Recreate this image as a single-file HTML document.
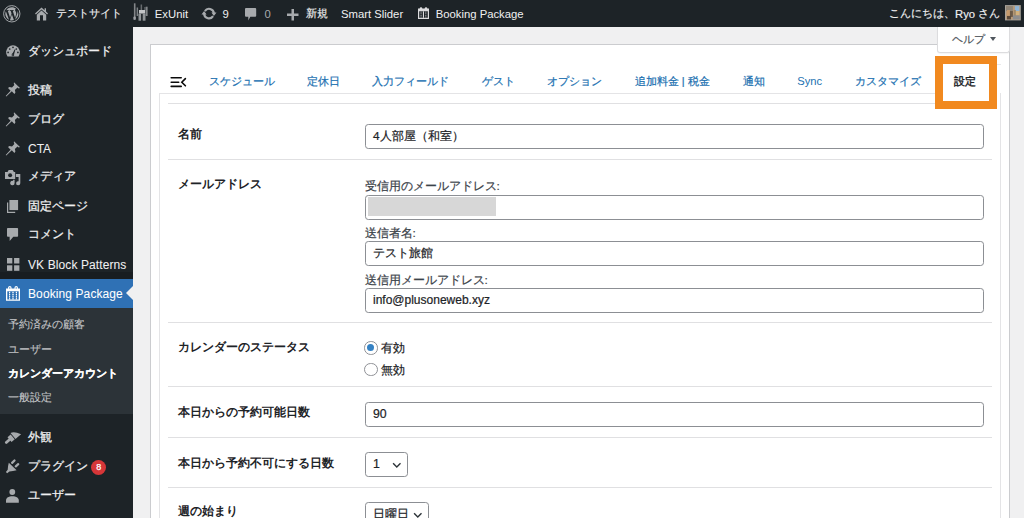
<!DOCTYPE html>
<html lang="ja"><head><meta charset="utf-8">
<style>
*{margin:0;padding:0;box-sizing:border-box}
html,body{width:1024px;height:518px;overflow:hidden;background:#f0f0f1;font-family:"Liberation Sans",sans-serif;color:#1d2327}
.a{position:absolute;white-space:nowrap}
svg.a{overflow:visible}
#bar{position:absolute;left:0;top:0;width:1024px;height:27px;background:#1d2327;color:#f0f0f1;font-size:11px}
#bar .t{position:absolute;top:0;line-height:27px;white-space:nowrap;-webkit-text-stroke:.15px currentColor}
#bar .L{top:1px;font-size:11.3px;-webkit-text-stroke:0}
#side{position:absolute;left:0;top:27px;width:133px;height:491px;background:#1d2327;color:#f0f0f1;font-size:12px;-webkit-text-stroke:.25px currentColor}
.m{position:absolute;left:28px;line-height:16px;white-space:nowrap}
.sm{position:absolute;left:8px;font-size:11.2px;color:#c3c4c7;line-height:16px;white-space:nowrap;-webkit-text-stroke:.12px currentColor}
#panel{position:absolute;left:150px;top:44px;width:860px;height:500px;background:#fff;border:1px solid #cbcccf}
#help{position:absolute;left:937px;top:27px;width:72.5px;height:25.5px;background:#fff;border:1px solid #dcdcde;border-top:none;border-radius:0 0 3px 3px;box-shadow:0 1px 1px rgba(0,0,0,.04)}
.tab{position:absolute;top:72.5px;line-height:17px;font-size:10.9px;color:#2271b1;white-space:nowrap}
#box{position:absolute;left:159px;top:93px;width:842px;height:450px;border:1px solid #e4e4e6;border-top:none;background:#fff}
.sep{position:absolute;left:168px;width:824px;height:1px;background:#e0e0e2}
.lbl{position:absolute;left:178px;font-size:11.8px;font-weight:bold;line-height:16px;color:#1d2327;white-space:nowrap}
.inp{position:absolute;left:365px;width:619px;height:24.6px;border:1px solid #8c8f94;border-radius:3.3px;background:#fff;font-size:11.8px;line-height:22.6px;padding-left:7px;color:#1d2327;white-space:nowrap}
.cap{position:absolute;left:364.5px;font-size:11.8px;line-height:16px;color:#3c434a;white-space:nowrap}
.inp,.cap,.tab{-webkit-text-stroke:.22px currentColor}
</style></head><body>
<div id="bar">
  <svg class="a" style="left:3px;top:4.8px" width="17.6" height="17.6" viewBox="0 0 20 20">
    <circle cx="10" cy="10" r="9.3" fill="none" stroke="#a7aaad" stroke-width="1.1"/>
    <path fill="#a7aaad" d="M2.6 10c0 2.9 1.700 5.500 4.200 6.700L3.300 7C2.900 7.900 2.600 8.900 2.600 10zM15 9.600c0-.9-.3-1.600-.6-2.100-.4-.6-.7-1.100-.7-1.700 0-.7.5-1.300 1.200-1.300h.1C13.700 3.300 11.900 2.600 10 2.600c-2.600 0-4.900 1.300-6.200 3.300h.5c.8 0 2-.1 2-.1.4 0 .5.600 0 .6 0 0-.4 0-.9.100l2.700 8.100 1.600-4.900L8.700 6.500c-.4 0-.8-.1-.8-.1-.4 0-.4-.6 0-.6 0 0 1.200.1 2 .1.800 0 2-.1 2-.1.400 0 .5.600 0 .6 0 0-.4 0-.9.100l2.700 8 .7-2.400c.3-1 .6-1.700.6-2.500zM10.100 10.700l-2.200 6.500c.7.2 1.400.3 2.100.3.900 0 1.700-.1 2.500-.4l-.1-.1-2.300-6.300zm6.400-4.200c0 .2.1.5.1.8 0 .8-.2 1.700-.6 2.800l-2.300 6.600c2.200-1.300 3.700-3.700 3.700-6.400 0-1.400-.3-2.600-.9-3.800z"/>
  </svg>
  <svg class="a" style="left:35px;top:7.3px" width="13" height="13.5" viewBox="0 0 13 13.5">
    <path fill="#a7aaad" d="M6.5 0.6L0 6.4l0.9 1L6.5 2.5l5.6 4.900.9-1L11 4.500V1.300H9.600v1.900z"/>
    <path fill="#a7aaad" d="M6.5 3.600L1.800 7.700v5.800h9.400V7.700zM5 8.200h3v5.300H5z" fill-rule="evenodd"/>
  </svg>
  <div class="t" style="left:55.5px">テストサイト</div>
  <svg class="a" style="left:130px;top:2px" width="22" height="22" viewBox="0 0 22 22">
    <g fill="#a5a8ab">
      <rect x="3.900" y="1.300" width="1.600" height="16" opacity=".75"/>
      <rect x="3.300" y="14.500" width="2.600" height="3.500" rx="1" opacity=".8"/>
      <rect x="6.600" y="5.500" width="1.500" height="8.500" opacity=".7"/>
      <rect x="15.700" y="4.700" width="1.900" height="9.300" opacity=".75"/>
      <rect x="10.600" y="2.500" width="1.500" height="6" opacity=".55"/>
      <rect x="14.300" y="5" width="1.200" height="3" opacity=".5"/>
      <rect x="9" y="8" width="6.200" height="3.600" fill="#c3c5c7"/>
      <rect x="8.500" y="11.700" width="2.600" height="7" opacity=".85"/>
      <rect x="12.700" y="11.700" width="2.800" height="7" opacity=".85"/>
    </g>
  </svg>
  <div class="t L" style="left:154.8px">ExUnit</div>
  <svg class="a" style="left:201px;top:7px" width="16" height="13" viewBox="0 0 16 13">
    <path fill="none" stroke="#a7aaad" stroke-width="2.100" d="M3.900 4.100A4.900 4.900 0 0 1 12.900 6.300M12.100 9.100A4.900 4.900 0 0 1 3.100 6.900"/>
    <path fill="#a7aaad" d="M10.400 5.600h5.100L12.900 9zM.5 7.400h5.100L3.100 4z"/>
  </svg>
  <div class="t L" style="left:222.5px">9</div>
  <svg class="a" style="left:244.8px;top:8px" width="11.2" height="12.5" viewBox="0 0 11.2 12.5">
    <path fill="#a7aaad" d="M1 0h9.200a1 1 0 0 1 1 1v6.800a1 1 0 0 1-1 1H5.300L3.300 12.400V8.800H1a1 1 0 0 1-1-1V1a1 1 0 0 1 1-1z"/>
  </svg>
  <div class="t L" style="left:264.5px;color:#a7aaad">0</div>
  <svg class="a" style="left:287px;top:8.6px" width="11.5" height="11.4" viewBox="0 0 11.5 11.4">
    <path fill="#a7aaad" d="M4.500 0h2.500v4.500h4.500v2.500H7v4.400H4.500V7H0V4.500h4.500z"/>
  </svg>
  <div class="t" style="left:305.5px">新規</div>
  <div class="t L" style="left:341px">Smart Slider</div>
  <svg class="a" style="left:418px;top:6.9px" width="11" height="12" viewBox="0 0 11 12">
    <path fill="#dcdcde" fill-rule="evenodd" d="M0 1.600h11V12H0zM1.200 4.300v6.500h8.600V4.300z"/>
    <circle cx="3" cy="1.500" r="1.300" fill="#dcdcde"/><circle cx="8" cy="1.500" r="1.300" fill="#dcdcde"/>
    <g fill="#dcdcde"><rect x="4.900" y="4.300" width="1.100" height="6.500"/>
    <rect x="2.600" y="4.700" width=".9" height=".9"/><rect x="2.600" y="6.300" width=".9" height=".9"/><rect x="2.600" y="7.900" width=".9" height=".9"/><rect x="2.600" y="9.500" width=".9" height=".9"/>
    <rect x="7.400" y="4.700" width=".9" height=".9"/><rect x="7.400" y="6.300" width=".9" height=".9"/><rect x="7.400" y="7.900" width=".9" height=".9"/><rect x="7.400" y="9.500" width=".9" height=".9"/></g>
  </svg>
  <div class="t L" style="left:435.7px">Booking Package</div>
  <div class="t" style="left:889px">こんにちは、<span style="font-size:11.3px;position:relative;top:1px">Ryo</span> さん</div>
  <svg class="a" style="left:1005px;top:5.2px" width="15.8" height="15.5" viewBox="0 0 16 15.5">
    <rect width="16" height="15.5" fill="#a9a49c"/>
    <rect x="1" y="1" width="14" height="13.5" fill="#b89a78"/>
    <rect x="1" y="1" width="7" height="5" fill="#8f8476"/>
    <rect x="10" y="1" width="4.500" height="5" fill="#8fb4d6"/>
    <rect x="2" y="5" width="3" height="6" fill="#c49a6c"/>
    <rect x="5" y="6" width="3" height="6" fill="#6b5a48"/>
    <rect x="9" y="5" width="2" height="7" fill="#a08a6a"/>
    <rect x="11" y="6" width="3.500" height="4" fill="#d2b27e"/>
    <rect x="8" y="10.500" width="7" height="4" fill="#8e8e8e"/>
    <rect x="2" y="11" width="4" height="3.500" fill="#5b4a3a"/>
  </svg>
</div>

<div id="side">
  <!-- dashboard -->
  <svg class="a" style="left:5.6px;top:17.7px" width="14" height="11.5" viewBox="0 0 14 11.5">
    <path fill="#a7aaad" d="M1.500 11.400A6.900 6.900 0 1 1 12.500 11.400z"/>
    <g fill="#1d2327"><circle cx="7" cy="2.300" r=".85"/><circle cx="3.700" cy="4" r=".85"/><circle cx="10.300" cy="4" r=".85"/><circle cx="2.100" cy="7.400" r=".85"/><circle cx="11.900" cy="7.400" r=".85"/>
    <path d="M6 9.600L8.800 4.200l.6.3L7.800 10.200z"/><circle cx="6.900" cy="9.900" r="1.300"/></g>
    <circle cx="6.900" cy="9.900" r=".5" fill="#a7aaad"/>
  </svg>
  <div class="m" style="top:16px">ダッシュボード</div>
  <!-- pins -->
  <svg class="a" style="left:5.2px;top:55px" width="15.3" height="14.7" viewBox="0 0 15.3 14.7"><path fill="#a7aaad" d="M9 0.300l6 5.700-1.300.4-1.200-.8-2.600 2.400.5 2.600-1 1.300-2.600-2.600L1.300 14.600.7 14l4.900-5.300-2.600-2.600 1.400-1 2.600.5 2.400-2.600-.6-1.300z"/></svg>
  <div class="m" style="top:54.7px">投稿</div>
  <svg class="a" style="left:5.2px;top:84.5px" width="15.3" height="14.7" viewBox="0 0 15.3 14.7"><path fill="#a7aaad" d="M9 0.300l6 5.700-1.300.4-1.200-.8-2.600 2.400.5 2.600-1 1.300-2.600-2.600L1.300 14.600.7 14l4.900-5.300-2.600-2.600 1.400-1 2.600.5 2.400-2.600-.6-1.300z"/></svg>
  <div class="m" style="top:83.7px">ブログ</div>
  <svg class="a" style="left:5.2px;top:113.5px" width="15.3" height="14.7" viewBox="0 0 15.3 14.7"><path fill="#a7aaad" d="M9 0.300l6 5.700-1.300.4-1.200-.8-2.600 2.400.5 2.600-1 1.300-2.600-2.600L1.300 14.600.7 14l4.900-5.300-2.600-2.600 1.400-1 2.600.5 2.400-2.600-.6-1.300z"/></svg>
  <div class="m" style="top:113.8px;-webkit-text-stroke:.05px">CTA</div>
  <!-- media -->
  <svg class="a" style="left:5px;top:143px" width="16" height="16" viewBox="0 0 16 16">
    <path fill="#a7aaad" d="M0 2h2.500L3.700 0h4l1.200 2h1.300v7H0z"/>
    <circle cx="5.100" cy="5.300" r="2" fill="#1d2327"/>
    <path fill="#a7aaad" d="M10.900 4h4.400v9.300A2.100 2.100 0 1 1 13.600 11.200V7h-2.700zM8.100 9.800h1.500v3.300A2.200 2.200 0 1 1 8.100 11z"/>
  </svg>
  <div class="m" style="top:140.8px">メディア</div>
  <!-- pages -->
  <svg class="a" style="left:6.800px;top:172.900px" width="11.100" height="13.100" viewBox="0 0 11.100 13.100">
    <path fill="#a7aaad" d="M2.400 0h8.700v10.100H2.400z"/><path fill="#a7aaad" d="M0 2.400h1.200v9.400h7v1.200H0z"/>
  </svg>
  <div class="m" style="top:170.8px">固定ページ</div>
  <!-- comments -->
  <svg class="a" style="left:6.800px;top:201.300px" width="11.100" height="13.200" viewBox="0 0 11.100 13.200">
    <path fill="#a7aaad" d="M.8 0h9.500a.8.8 0 0 1 .8.8V8a.8.8 0 0 1-.8.8H6.300L2.700 13.100 2.600 8.800H.8A.8.8 0 0 1 0 8V.8A.8.8 0 0 1 .8 0z"/>
  </svg>
  <div class="m" style="top:199.3px">コメント</div>
  <!-- grid -->
  <svg class="a" style="left:6.7px;top:231.1px" width="12.4" height="12.8" viewBox="0 0 12.4 12.8">
    <g fill="#a7aaad"><rect x="0" y="0" width="5.3" height="5.5"/><rect x="7.1" y="0" width="5.3" height="5.5"/><rect x="0" y="7.3" width="5.3" height="5.5"/><rect x="7.1" y="7.3" width="5.3" height="5.5"/></g>
  </svg>
  <div class="m" style="top:229.8px;-webkit-text-stroke:.05px;letter-spacing:.1px">VK Block Patterns</div>
  <!-- booking highlighted -->
  <div class="a" style="left:0;top:244.6px;width:133px;height:7px;background:#181d21"></div>
  <div class="a" style="left:0;top:251.7px;width:133px;height:29.1px;background:#2f71b5"></div>
  <svg class="a" style="left:126px;top:258.5px" width="7" height="14" viewBox="0 0 7 14"><path fill="#f0f0f1" d="M7 0v14L0 7z"/></svg>
  <svg class="a" style="left:5.9px;top:259.2px" width="14" height="15" viewBox="0 0 14 15">
    <path fill="#fff" fill-rule="evenodd" d="M0 2.600h14V14.800H0zM1.300 5.300v8.200h11.400V5.300z"/>
    <path fill="none" stroke="#fff" stroke-width="1.100" d="M2.600 3.200V1.800a1.200 1.200 0 0 1 2.400 0V3.200M9 3.200V1.800a1.200 1.200 0 0 1 2.400 0V3.200"/>
    <g fill="#fff"><rect x="3.0" y="5.9" width="1.2" height="1.2"/><rect x="3.0" y="8.0" width="1.2" height="1.2"/><rect x="3.0" y="10.1" width="1.2" height="1.2"/><rect x="3.0" y="12.2" width="1.2" height="1.2"/><rect x="6.4" y="5.9" width="1.2" height="1.2"/><rect x="6.4" y="8.0" width="1.2" height="1.2"/><rect x="6.4" y="10.1" width="1.2" height="1.2"/><rect x="6.4" y="12.2" width="1.2" height="1.2"/><rect x="9.8" y="5.9" width="1.2" height="1.2"/><rect x="9.8" y="8.0" width="1.2" height="1.2"/><rect x="9.8" y="10.1" width="1.2" height="1.2"/><rect x="9.8" y="12.2" width="1.2" height="1.2"/><rect x="3.25" y="5.5" width=".7" height="8" opacity=".55"/><rect x="6.65" y="5.5" width=".7" height="8" opacity=".55"/><rect x="10.05" y="5.5" width=".7" height="8" opacity=".55"/></g>
  </svg>
  <div class="m" style="top:258.6px;color:#fff;-webkit-text-stroke:.05px;letter-spacing:.1px">Booking Package</div>
  <div class="a" style="left:0;top:280.8px;width:133px;height:106.2px;background:#2c3338"></div>
  <div class="sm" style="top:289.4px">予約済みの顧客</div>
  <div class="sm" style="top:314px">ユーザー</div>
  <div class="sm" style="top:337.7px;color:#fff;font-weight:bold">カレンダーアカウント</div>
  <div class="sm" style="top:362px">一般設定</div>
  <!-- appearance -->
  <svg class="a" style="left:0;top:400px" width="24" height="24" viewBox="0 0 24 24">
    <g transform="translate(5.300 16.300) rotate(-41)" fill="#a7aaad">
      <path d="M1.300 -1.400H6.200V1.400H1.300A1.400 1.400 0 0 1 1.300 -1.400z"/>
      <path d="M5.600 -3.100H9.800V3.100H5.600z"/>
      <path d="M10.600 -4.300Q14.500 -3.800 17.900 3.500L14 3.400H10.600z"/>
    </g>
  </svg>
  <div class="m" style="top:401.8px">外観</div>
  <!-- plugins -->
  <svg class="a" style="left:0;top:428px" width="24" height="24" viewBox="0 0 24 24">
    <path fill="#a7aaad" d="M8.800 7.800L16.600 15.300Q13 16.100 9.400 16.500L7.200 18.200L5.900 16.900L7.700 14.700Q7.900 11 8.800 7.800z"/>
    <path d="M12.100 7.800L14.500 5.500M15.800 11.300L18.200 9.200" stroke="#a7aaad" stroke-width="2.300" stroke-linecap="round"/>
  </svg>
  <div class="m" style="top:431px">プラグイン</div>
  <div class="a" style="left:91.2px;top:433.2px;width:15px;height:15px;border-radius:50%;background:#d63638;color:#fff;font-size:9px;line-height:15px;text-align:center">8</div>
  <!-- users -->
  <svg class="a" style="left:6.400px;top:461.500px" width="13" height="14" viewBox="0 0 13 14">
    <circle cx="6.300" cy="3" r="2.900" fill="#a7aaad"/>
    <path fill="#a7aaad" d="M0 13.800V11.300C0 8.800 2.600 7.200 6.400 7.200S12.800 8.800 12.800 11.300V13.800z"/>
  </svg>
  <div class="m" style="top:460.2px">ユーザー</div>
</div>

<div id="panel"></div>
<div id="help"></div>
<div class="a" style="left:952px;top:31.2px;font-size:10.6px;line-height:16px;color:#50575e;-webkit-text-stroke:.2px currentColor">ヘルプ</div>
<svg class="a" style="left:990px;top:37.3px" width="6" height="4" viewBox="0 0 6 4"><path fill="#50575e" d="M0 0h6L3 4z"/></svg>
<div id="box"></div>
<div class="tab" style="left:208.6px">スケジュール</div>
<div class="tab" style="left:306.7px">定休日</div>
<div class="tab" style="left:372.3px">入力フィールド</div>
<div class="tab" style="left:481.5px">ゲスト</div>
<div class="tab" style="left:547.4px">オプション</div>
<div class="tab" style="left:634.8px">追加料金 | 税金</div>
<div class="tab" style="left:742.7px">通知</div>
<div class="tab" style="left:797.3px;top:73.3px;font-size:11.2px;-webkit-text-stroke:0">Sync</div>
<div class="tab" style="left:854.9px">カスタマイズ</div>
<svg class="a" style="left:170px;top:76px" width="17" height="12" viewBox="0 0 17 12"><path d="M1.2 1.800h10M1.200 6.200h7.500M1.200 10.400h10" stroke="#0a0a0a" stroke-width="1.6" stroke-linecap="round"/><path d="M15.400 2.600L11.800 6.200l3.600 3.600" fill="none" stroke="#0a0a0a" stroke-width="1.6" stroke-linecap="round"/></svg>
<div class="a" style="left:159px;top:93px;width:787px;height:1px;background:#e4e4e6"></div>
<div class="a" style="left:945px;top:64px;width:56px;height:1px;background:#e9e9eb"></div>



<div class="sep" style="top:103px"></div>
<div class="lbl" style="top:126px">名前</div>
<div class="inp" style="top:124.2px">4人部屋（和室）</div>
<div class="sep" style="top:159px"></div>
<div class="lbl" style="top:176px">メールアドレス</div>
<div class="cap" style="top:178px">受信用のメールアドレス:</div>
<div class="inp" style="top:194.6px;height:25px"><div class="a" style="left:1.5px;top:1.4px;width:128.5px;height:18.8px;background:#d7d7d7"></div></div>
<div class="cap" style="top:225px">送信者名:</div>
<div class="inp" style="top:241px">テスト旅館</div>
<div class="cap" style="top:271.5px">送信用メールアドレス:</div>
<div class="inp" style="top:288.2px;font-size:12px">info@plusoneweb.xyz</div>
<div class="sep" style="top:322px"></div>

<div class="lbl" style="top:339px">カレンダーのステータス</div>
<div class="a" style="left:364.2px;top:341.3px;width:13.4px;height:13.4px;border:1.1px solid #8f9196;border-radius:50%;background:#fff"><div style="position:absolute;left:2.1px;top:2.1px;width:7px;height:7px;border-radius:50%;background:#3582c4"></div></div>
<div class="cap" style="left:380.5px;top:340.3px;color:#1d2327">有効</div>
<div class="a" style="left:364.2px;top:363px;width:13.4px;height:13.4px;border:1.1px solid #8f9196;border-radius:50%;background:#fff"></div>
<div class="cap" style="left:380.5px;top:361.5px;color:#1d2327">無効</div>
<div class="sep" style="top:386px"></div>
<div class="lbl" style="top:403.6px">本日からの予約可能日数</div>
<div class="inp" style="top:402px;height:25px;font-size:12.3px">90</div>
<div class="sep" style="top:437px"></div>
<div class="lbl" style="top:454.6px">本日から予約不可にする日数</div>
<div class="inp" style="top:452px;width:43.2px;height:25px;font-size:12.3px">1</div>
<svg class="a" style="left:392px;top:461.5px" width="10" height="7" viewBox="0 0 10 7"><path d="M1.100 1.300L4.800 5L8.500 1.300" fill="none" stroke="#2c3338" stroke-width="1.400"/></svg>
<div class="sep" style="top:487px"></div>
<div class="lbl" style="top:502.8px">週の始まり</div>
<div class="inp" style="top:502px;width:64.3px">日曜日</div>
<svg class="a" style="left:413px;top:511.5px" width="10" height="7" viewBox="0 0 10 7"><path d="M1.100 1.300L4.800 5L8.500 1.300" fill="none" stroke="#2c3338" stroke-width="1.400"/></svg>
<div class="a" style="left:935px;top:56px;width:62px;height:52.8px;border:8.5px solid #f1891f;background:#fff;z-index:5"></div>
<div class="tab" style="left:953.8px;top:72.8px;color:#1d2327;z-index:6;-webkit-text-stroke:.4px currentColor">設定</div>
</body></html>
